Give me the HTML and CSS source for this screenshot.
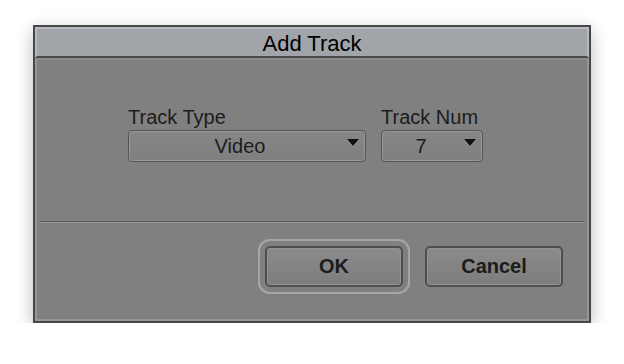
FILE: index.html
```html
<!DOCTYPE html>
<html lang="en">

<head>
  <meta charset="UTF-8">
  <title>Add Track</title>
  <link rel="stylesheet" href="styles.css">
</head>

<body>
  <div class="dialog">
    <div class="dialog-title">Add Track</div>
    <div class="dialog-body">
      <div class="fields">
        <div class="field field-type">
          <div class="field-label">Track Type</div>
          <div class="select">
            <span class="select-value">Video</span>
            <span class="select-arrow"></span>
          </div>
        </div>
        <div class="field field-num">
          <div class="field-label">Track Num</div>
          <div class="select">
            <span class="select-value">7</span>
            <span class="select-arrow"></span>
          </div>
        </div>
      </div>
      <div class="divider"></div>
      <div class="actions">
        <button class="btn btn-default">OK</button>
        <button class="btn">Cancel</button>
      </div>
    </div>
  </div>
</body>

</html>
```

FILE: styles.css
```css
* {
  margin: 0;
  padding: 0;
  box-sizing: border-box;
}

body {
  background-color: #ffffff;
  font-family: "Liberation Sans", Arial, sans-serif;
}

.dialog {
  width: 558px;
  height: 298px;
  margin: 25px 0 0 33px;
  border: 2px solid #474747;
  display: flex;
  flex-direction: column;
  box-shadow: 0 5px 16px rgba(0, 0, 0, 0.28);
}

.dialog-title {
  height: 31px;
  padding-top: 2px;
  background-color: #a1a5aa;
  border: 2px solid #b6b9bd;
  border-bottom: 2px solid #4a4a4a;
  font-size: 22px;
  line-height: 25px;
  text-align: center;
  color: #000;
}

.dialog-body {
  flex: 1;
  background-color: #808080;
  border: 2px solid #979797;
  border-top-color: #8c8c8c;
  display: flex;
  flex-direction: column;
}

.fields {
  display: flex;
  gap: 15px;
  margin: 46px 0 0 91px;
}

.field-type {
  width: 238px;
}

.field-num {
  width: 102px;
}

.field-label {
  font-size: 20px;
  line-height: 22px;
  color: #1c1c1c;
  margin-bottom: 2px;
}

.select {
  position: relative;
  height: 32px;
  border: 1px solid #545454;
  border-radius: 4px;
  box-shadow: inset 0 0 0 1px #989898;
  background: linear-gradient(#868686, #7f7f7f);
  display: flex;
  align-items: center;
  justify-content: center;
  padding-right: 14px;
}

.field-num .select {
  padding-right: 22px;
}

.select-value {
  font-size: 20px;
  color: #1c1c1c;
}

.select-arrow {
  position: absolute;
  right: 6px;
  top: 8px;
  width: 0;
  height: 0;
  border-left: 6.5px solid transparent;
  border-right: 6.5px solid transparent;
  border-top: 7px solid #111;
  filter: drop-shadow(0 1px 0 #9a9a9a);
}

.divider {
  margin: 59px 3px 0 3px;
  height: 2px;
  border-top: 1px solid #5a5a5a;
  border-bottom: 1px solid #9b9b9b;
}

.actions {
  display: flex;
  justify-content: flex-end;
  gap: 22px;
  margin: 23px 24px 0 0;
}

.btn {
  width: 138px;
  height: 41px;
  border: 2px solid #4f4f4f;
  border-radius: 5px;
  background: linear-gradient(#8b8b8b, #7d7d7d);
  box-shadow: inset 0 0 0 1px #939393;
  font-family: "Liberation Sans", Arial, sans-serif;
  font-weight: bold;
  font-size: 20px;
  color: #1c1c1c;
  outline: none;
}

.btn-default {
  box-shadow: inset 0 0 0 1px #939393, 0 0 0 5px #808080, 0 0 0 7px #a6a6a6;
}
```
